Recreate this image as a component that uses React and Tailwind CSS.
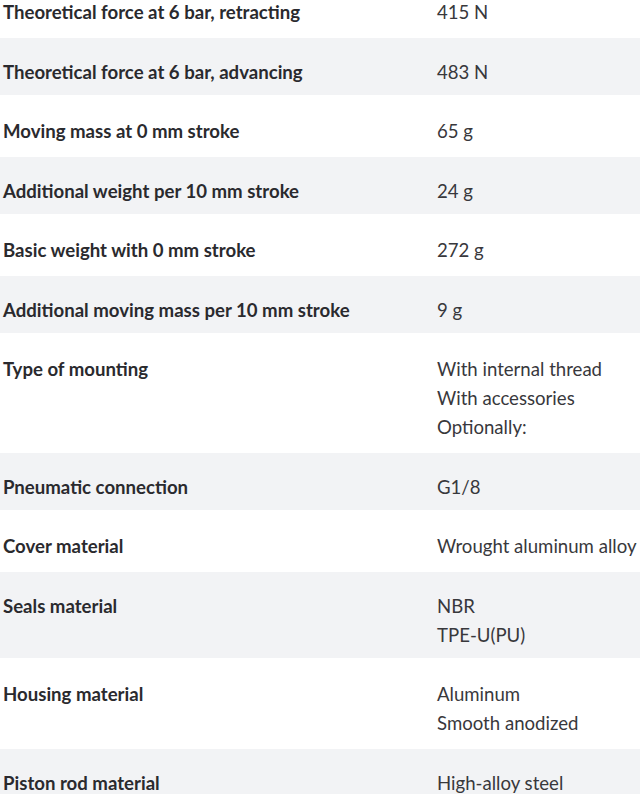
const ROWS = [
  { label: 'Theoretical force at 6 bar, retracting', values: ['415 N'] },
  { label: 'Theoretical force at 6 bar, advancing', values: ['483 N'] },
  { label: 'Moving mass at 0 mm stroke', values: ['65 g'] },
  { label: 'Additional weight per 10 mm stroke', values: ['24 g'] },
  { label: 'Basic weight with 0 mm stroke', values: ['272 g'] },
  { label: 'Additional moving mass per 10 mm stroke', values: ['9 g'] },
  { label: 'Type of mounting', values: ['With internal thread', 'With accessories', 'Optionally:'] },
  { label: 'Pneumatic connection', values: ['G1/8'] },
  { label: 'Cover material', values: ['Wrought aluminum alloy'] },
  { label: 'Seals material', values: ['NBR', 'TPE-U(PU)'] },
  { label: 'Housing material', values: ['Aluminum', 'Smooth anodized'] },
  { label: 'Piston rod material', values: ['High-alloy steel'] },
]

function SpecRow({ row, index }) {
  const odd = index % 2 === 1
  const pad = index === 0
    ? 'pt-0 pb-[11px]'
    : odd ? 'pt-[20px] pb-[8px]' : 'pt-[22px] pb-[11px]'
  return (
    <div className={`grid grid-cols-[434px_1fr] pl-[3px] ${odd ? 'bg-[#f2f3f5]' : 'bg-white'} ${pad}`}>
      <div className="font-bold text-[#2a2a2e] leading-[29px]">{row.label}</div>
      <div className="text-[#38383c] leading-[29px] whitespace-nowrap">
        {row.values.map(v => <div key={v}>{v}</div>)}
      </div>
    </div>
  )
}

export default function App() {
  return (
    <div className="w-[640px] h-[794px] overflow-hidden bg-white">
      <div className="-mt-[2px] text-[18.6px]" style={{ fontFamily: 'Lato, "Noto Sans", sans-serif' }}>
        {ROWS.map((row, i) => <SpecRow key={row.label} row={row} index={i} />)}
      </div>
    </div>
  )
}
